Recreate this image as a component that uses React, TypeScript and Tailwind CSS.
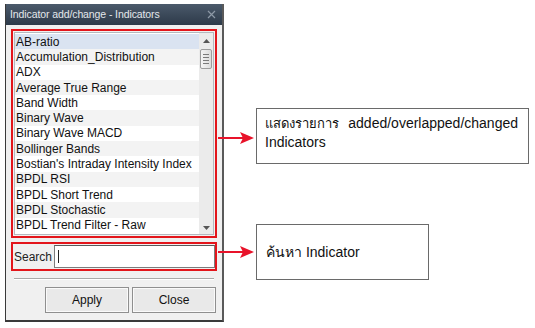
import React from "react";

const items = [
  "AB-ratio",
  "Accumulation_Distribution",
  "ADX",
  "Average True Range",
  "Band Width",
  "Binary Wave",
  "Binary Wave MACD",
  "Bollinger Bands",
  "Bostian's Intraday Intensity Index",
  "BPDL RSI",
  "BPDL Short Trend",
  "BPDL Stochastic",
  "BPDL Trend Filter - Raw",
];

function Arrow({ top }: { top: number }) {
  return (
    <svg
      className="absolute left-[218px]"
      style={{ top }}
      width="37"
      height="14"
      viewBox="0 0 37 14"
    >
      <line x1="0" y1="7" x2="27" y2="7" stroke="#e8132a" strokeWidth="2" />
      <path d="M22 1 L36 7 L22 13 L25 7 Z" fill="#e8132a" />
    </svg>
  );
}

export default function App() {
  return (
    <div
      className="relative w-[535px] h-[328px] bg-white flex overflow-hidden"
      style={{ fontFamily: '"Liberation Sans", "Noto Sans", sans-serif' }}
    >
      {/* Dialog */}
      <div className="ml-[5px] mt-[4px] w-[219px] h-[318px] flex flex-col border-l border-r-2 border-b-2 border-l-[#3a3a3a] border-r-[#5a5a5a] border-b-[#3a3a3a] bg-[#f0f0f0]">
        <div className="h-[21px] flex items-center justify-between pl-[4px] pr-[6px] bg-gradient-to-b from-[#4b5a6b] to-[#2d3a49]">
          <span className="text-[10.5px] text-[#e4e8ec] tracking-[-0.1px]">
            Indicator add/change - Indicators
          </span>
          <svg width="9" height="9" viewBox="0 0 9 9">
            <path d="M1 1 L8 8 M8 1 L1 8" stroke="#8d99a6" strokeWidth="1.2" />
          </svg>
        </div>
        <div className="flex flex-col px-[5px] pt-[4px]">
          {/* list red box */}
          <div className="h-[209px] border-2 border-[#e3151b] p-[1px] flex">
            <div className="flex-1 flex border border-[#b5b8be] bg-white">
              <div className="flex-1 flex flex-col pt-[1px]">
                {items.map((it, i) => (
                  <div
                    key={it}
                    className={
                      "h-[15.3px] flex items-center pl-[1px] text-[12px] leading-none text-[#111] whitespace-nowrap " +
                      (i === 0
                        ? "bg-[#dae3f1]"
                        : i % 2 === 1
                        ? "bg-[#f3f3f3]"
                        : "bg-white")
                    }
                  >
                    {it}
                  </div>
                ))}
              </div>
              {/* scrollbar */}
              <div className="w-[14px] bg-[#ebebeb] flex flex-col items-center">
                <div className="h-[15px] flex items-center justify-center">
                  <svg width="7" height="4" viewBox="0 0 7 4">
                    <path d="M0 4 L3.5 0 L7 4 Z" fill="#555" />
                  </svg>
                </div>
                <div className="w-[12px] h-[20px] mt-[1px] rounded-[2px] border border-[#9c9c9c] bg-gradient-to-r from-[#f4f4f4] to-[#dcdcdc] flex flex-col items-center justify-center gap-[2px]">
                  <div className="w-[6px] h-[1px] bg-[#7a7a7a]" />
                  <div className="w-[6px] h-[1px] bg-[#7a7a7a]" />
                  <div className="w-[6px] h-[1px] bg-[#7a7a7a]" />
                  <div className="w-[6px] h-[1px] bg-[#7a7a7a]" />
                </div>
                <div className="flex-1" />
                <div className="h-[12px] flex items-center justify-center">
                  <svg width="7" height="4" viewBox="0 0 7 4">
                    <path d="M0 0 L3.5 4 L7 0 Z" fill="#555" />
                  </svg>
                </div>
              </div>
            </div>
          </div>
          {/* search red box */}
          <div className="mt-[4px] h-[29px] border-2 border-[#e3151b] flex items-center pl-[1px] pr-[0px]">
            <span className="text-[12px] text-[#222] w-[40px]">Search</span>
            <div className="flex-1 h-[23px] border border-[#7c7c7c] border-t-[#5a5a5a] bg-white flex items-center pl-[3px]">
              <div className="w-[1px] h-[13px] bg-[#222]" />
            </div>
          </div>
          {/* separator */}
          <div className="mt-[7px] mx-[3px] h-[2px] border-t border-t-[#a9a9a9] border-b border-b-white" />
          {/* buttons */}
          <div className="mt-[7px] flex justify-end gap-[3px] pr-[1px]">
            <button className="w-[84px] h-[26px] border border-[#8f8f8f] bg-[#e9e9e9] shadow-[inset_0_0_0_1px_#fafafa] text-[12px] text-[#111]">
              Apply
            </button>
            <button className="w-[84px] h-[26px] border border-[#8f8f8f] bg-[#e9e9e9] shadow-[inset_0_0_0_1px_#fafafa] text-[12px] text-[#111]">
              Close
            </button>
          </div>
        </div>
      </div>

      {/* Callouts */}
      <div className="ml-[32px] flex flex-col">
        <div className="mt-[108px] w-[273px] h-[56px] border border-[#6a6a6a] px-[8px] pt-[5px] text-[14px] leading-[18px] text-[#111]">
          <div className="flex justify-between items-baseline pr-[2px]">
            <span className="text-[13px]">แสดงรายการ</span>
            <span>added/overlapped/changed</span>
          </div>
          <div>Indicators</div>
        </div>
        <div className="mt-[60px] w-[173px] h-[56px] border border-[#6a6a6a] pl-[9px] flex items-center text-[14px] text-[#111]">
          ค้นหา Indicator
        </div>
      </div>

      <Arrow top={131} />
      <Arrow top={245} />
    </div>
  );
}
